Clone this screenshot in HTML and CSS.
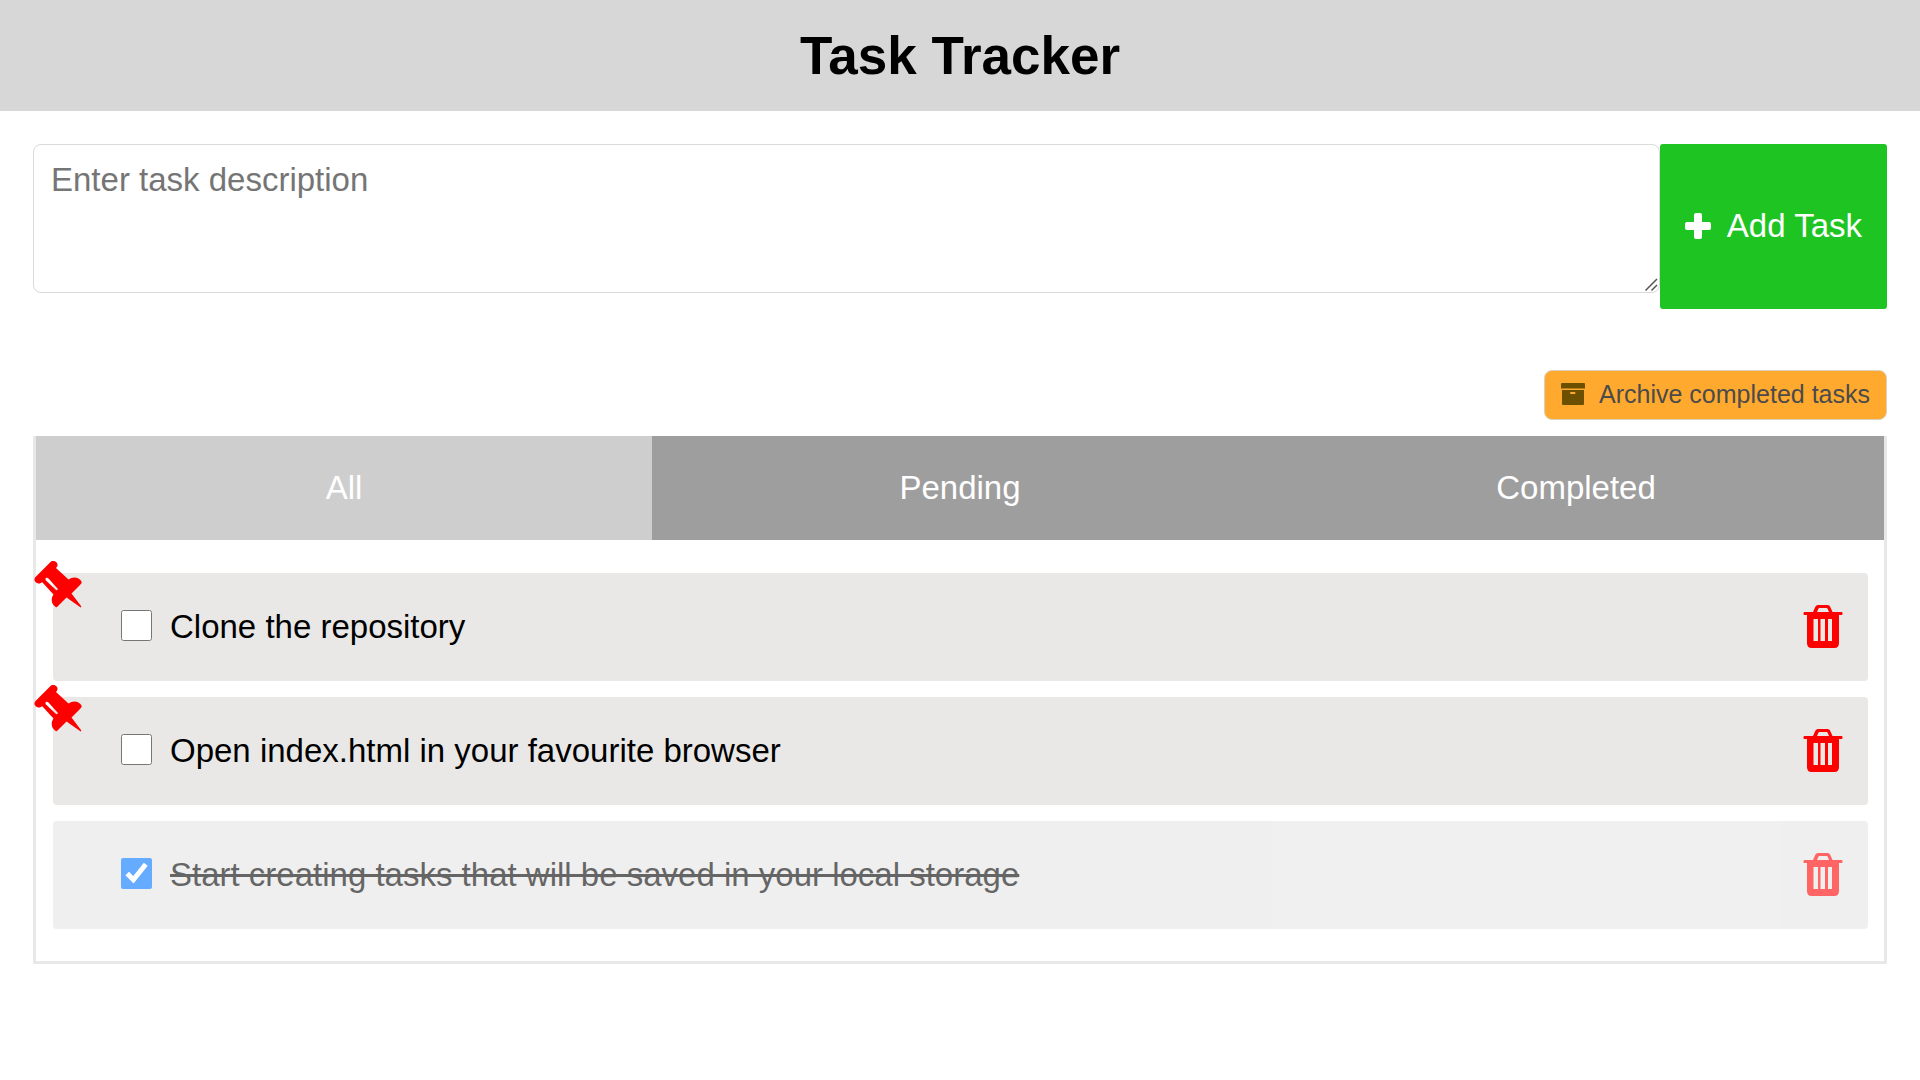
FILE: index.html
```html
<!DOCTYPE html>
<html lang="en">
<head>
<meta charset="utf-8">
<meta name="viewport" content="width=device-width, initial-scale=1">
<title>Task Tracker</title>
<link rel="stylesheet" href="styles.css">
</head>
<body>
<svg class="sprite" aria-hidden="true">
  <symbol id="pin" viewBox="0 0 48 48">
    <path fill-rule="evenodd" d="M16 2.500C18 0.500 21 0.500 23 3C24 5 23.500 6.500 22 8L34.500 19.500C39 16 45 17 47.500 21.500C48 23 47 24 46 25L37.500 33.500L47 46C47.500 47 47 48 46 47L32.500 37.500L23.500 46.500C22.500 48 21.500 47 20.500 46C17 43 17 38 19.500 34.500L8 22C7 23.500 5 24 3 23C0.500 22 -0.500 19 1.500 17ZM12 18C11 19 11.500 20 12.500 21L21.500 29.500C23 31 24.500 29.500 23.500 28.500L14.500 18.500C13.500 17.500 12.500 17.500 12 18Z"/>
  </symbol>
  <symbol id="trash" viewBox="0 0 40 44">
    <path fill-rule="evenodd" d="M10 7L12 2.500C12.700 1 13.500 0 15 0H24.500C26 0 27 1 27.500 2.500L29.500 7H38.500Q39.500 7 39.500 8V9Q39.500 10 38.500 10H36V38Q36 43 31.500 43H8.500Q4 43 4 38V10H1.500Q0.500 10 0.500 9V8Q0.500 7 1.500 7ZM14 7H26L24.500 3.500Q24.200 3 23.500 3H16.500Q15.800 3 15.500 3.500ZM10.500 14V36H15V14ZM17.500 14V36H22V14ZM25 14V36H29V14Z"/>
  </symbol>
</svg>
<header class="header"><h1 class="title">Task Tracker</h1></header>
<main class="main">
  <form class="task-form">
    <div class="input-wrap">
      <textarea class="task-input" placeholder="Enter task description" aria-label="Task description"></textarea>
      <svg class="grip" viewBox="0 0 15 15" aria-hidden="true"><path d="M1.500 13.500L13 2M7.500 13.500L13 8"/></svg>
    </div>
    <button class="add-button" type="button">
      <svg class="plus-icon" viewBox="0 0 26 26" aria-hidden="true"><path d="M9 2Q9 0 11 0H15Q17 0 17 2V9H24Q26 9 26 11V15Q26 17 24 17H17V24Q17 26 15 26H11Q9 26 9 24V17H2Q0 17 0 15V11Q0 9 2 9H9Z"/></svg>
      Add Task
    </button>
  </form>
  <div class="actions">
    <button class="archive-button" type="button">
      <svg class="archive-icon" viewBox="0 0 24 22" aria-hidden="true"><path fill-rule="evenodd" d="M1 0H23Q24 0 24 1V5.500H0V1Q0 0 1 0ZM1 7H23V21Q23 22 22 22H2Q1 22 1 21ZM10 9Q9 9 9 10T10 11H13.500Q14.500 11 14.500 10T13.500 9Z"/></svg>
      Archive completed tasks
    </button>
  </div>
  <section class="board">
    <nav class="tabs" aria-label="Task filter">
      <button class="tab tab-active" type="button">All</button>
      <button class="tab" type="button">Pending</button>
      <button class="tab" type="button">Completed</button>
    </nav>
    <ul class="tasks">
      <li class="task">
        <svg class="pin" aria-hidden="true"><use href="#pin"/></svg>
        <input class="check" type="checkbox" id="task-1">
        <label class="task-label" for="task-1">Clone the repository</label>
        <button class="delete" type="button" aria-label="Delete task"><svg class="trash"><use href="#trash"/></svg></button>
      </li>
      <li class="task">
        <svg class="pin" aria-hidden="true"><use href="#pin"/></svg>
        <input class="check" type="checkbox" id="task-2">
        <label class="task-label" for="task-2">Open index.html in your favourite browser</label>
        <button class="delete" type="button" aria-label="Delete task"><svg class="trash"><use href="#trash"/></svg></button>
      </li>
      <li class="task task-done">
        <input class="check" type="checkbox" id="task-3" checked>
        <label class="task-label" for="task-3">Start creating tasks that will be saved in your local storage</label>
        <button class="delete" type="button" aria-label="Delete task"><svg class="trash"><use href="#trash"/></svg></button>
      </li>
    </ul>
  </section>
</main>
</body>
</html>
```
FILE: styles.css
```css
* {
  box-sizing: border-box;
}

body {
  margin: 0;
  background: #fff;
  color: #000;
  font: 33px/38px "Liberation Sans", Arial, sans-serif;
}

button,
textarea {
  font: inherit;
}

button {
  border: 0;
  cursor: pointer;
}

.sprite {
  position: absolute;
  width: 0;
  height: 0;
}

.header {
  padding: 25px;
  background: #d7d7d7;
  text-align: center;
}

.title {
  margin: 0;
  font-size: 53px;
  line-height: 61px;
}

.main {
  padding: 33px;
}

.task-form {
  display: flex;
}

.input-wrap {
  position: relative;
  display: flex;
  flex: 1;
  align-items: flex-start;
  margin-bottom: 16px;
}

.task-input {
  flex: 1;
  height: 149px;
  padding: 16px 17px;
  border: 1px solid #dadada;
  border-radius: 8px;
  resize: vertical;
}

.task-input::placeholder {
  color: #757575;
}

.task-input::-webkit-resizer {
  background: transparent;
}

/* resize handle, drawn over the corner of the text box */
.grip {
  position: absolute;
  right: 1px;
  bottom: 1px;
  width: 15px;
  height: 15px;
  fill: none;
  stroke: #555;
  stroke-width: 1.5;
  pointer-events: none;
}

.add-button {
  display: flex;
  align-items: center;
  gap: 16px;
  padding: 0 25px 2px;
  border-radius: 3px;
  background: #1ec522;
  color: #fff;
}

.plus-icon {
  width: 26px;
  height: 26px;
  fill: currentColor;
}

.actions {
  display: flex;
  justify-content: flex-end;
  margin: 61px 0 16px;
}

.archive-button {
  display: flex;
  align-items: center;
  gap: 14px;
  padding: 7px 16px 9px;
  border: 1px solid #ddd0b8;
  border-radius: 8px;
  background: #ffaa2e;
  color: #4b4b4b;
  font-size: 25px;
  line-height: 32px;
}

.archive-icon {
  width: 24px;
  height: 22px;
  fill: #6c5000;
}

.board {
  border: 3px solid #e8e8e8;
  border-top: 0;
}

.tabs {
  display: grid;
  grid-template-columns: repeat(3, 1fr);
}

.tab {
  padding: 33px;
  background: #9e9e9e;
  color: #fff;
}

.tab-active {
  background: #cecece;
}

.tasks {
  display: flex;
  flex-direction: column;
  gap: 16px;
  margin: 0;
  padding: 33px 16px 32px 17px;
  list-style: none;
}

.task {
  position: relative;
  display: flex;
  align-items: center;
  min-height: 108px;
  padding: 0 25px 0 68px;
  border-radius: 4px;
  background: #e9e8e6;
}

.task-done {
  background: #e6e6e6;
  opacity: 0.6;
}

.pin {
  position: absolute;
  top: -13px;
  left: -19px;
  width: 48px;
  height: 48px;
  fill: #f00;
}

.check {
  width: 31px;
  height: 31px;
  margin: 0 18px 3px 0;
}

.task-label {
  flex: 1;
}

.delete {
  display: flex;
  padding: 0;
  background: none;
}

.trash {
  width: 40px;
  height: 44px;
  fill: #f00;
}

.task-done .task-label {
  text-decoration: line-through;
}
```
